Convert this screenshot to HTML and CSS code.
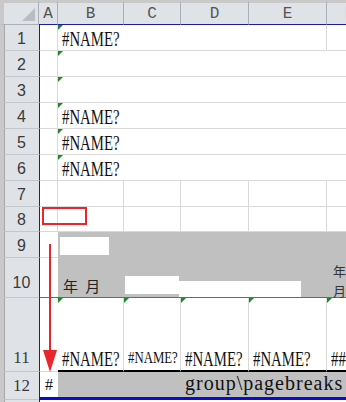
FILE: index.html
```html
<!DOCTYPE html>
<html>
<head>
    <title>Sheet</title>
    <link rel="stylesheet" href="styles.css">
</head>
<body>
<div class="sheet">
    <div class="corner"></div>
    <div class="ch">A</div>
    <div class="ch">B</div>
    <div class="ch">C</div>
    <div class="ch">D</div>
    <div class="ch">E</div>
    <div class="ch">F</div>

    <div class="rh">1</div>
    <div class="c a vr"></div>
    <div class="c span4 vr tri"><span class="err">#NAME?</span></div>
    <div class="c"></div>

    <div class="rh">2</div>
    <div class="c a vr"></div>
    <div class="c span5 tri"></div>

    <div class="rh">3</div>
    <div class="c a vr"></div>
    <div class="c span5 tri"></div>

    <div class="rh">4</div>
    <div class="c a vr"></div>
    <div class="c span5 tri"><span class="err">#NAME?</span></div>

    <div class="rh">5</div>
    <div class="c a vr"></div>
    <div class="c span5 tri"><span class="err">#NAME?</span></div>

    <div class="rh">6</div>
    <div class="c a vr"></div>
    <div class="c span5 tri"><span class="err">#NAME?</span></div>

    <div class="rh">7</div>
    <div class="c a vr"></div>
    <div class="c vr"></div>
    <div class="c vr"></div>
    <div class="c vr"></div>
    <div class="c vr"></div>
    <div class="c vr"></div>

    <div class="rh">8</div>
    <div class="c a vr"></div>
    <div class="c vr"></div>
    <div class="c vr"></div>
    <div class="c vr"></div>
    <div class="c vr"></div>
    <div class="c vr"></div>

    <div class="rh">9</div>
    <div class="c a"></div>
    <div class="band">
        <div class="bcell"><div class="wbox1"></div></div>
        <div class="bcell"></div>
        <div class="bcell"></div>
        <div class="bcell"></div>
        <div class="bcell"></div>
        <div class="bcell ym">年 月</div>
        <div class="bcell boxes">
            <div class="wbox2"></div>
            <div class="wbox3"></div>
        </div>
        <div class="bcell fcol"><span>年</span><span>月</span></div>
    </div>

    <div class="rh rh10">10</div>
    <div class="c a dark"></div>

    <div class="rh serif">11</div>
    <div class="c a"></div>
    <div class="c vr tri blk"><span class="err">#NAME?</span></div>
    <div class="c vr tri blk"><span class="err small">#NAME?</span></div>
    <div class="c vr tri blk"><span class="err">#NAME?</span></div>
    <div class="c vr tri blk"><span class="err">#NAME?</span></div>
    <div class="c vr tri blk"><span class="err">##</span></div>

    <div class="rh serif">12</div>
    <div class="c a blue hash">#</div>
    <div class="c span5 grey blue"><span class="pb">group\pagebreaks</span></div>

    <div class="rh"></div>
    <div class="c a"></div>
    <div class="c span5"></div>

    <div class="sel"></div>
    <svg class="arrow" width="18" height="130" viewBox="0 0 18 130">
        <rect x="7" y="0" width="2" height="110" fill="#e8262b"/>
        <polygon points="1,106 15,106 8,128" fill="#e8262b"/>
    </svg>
</div>
</body>
</html>
```
FILE: styles.css
```css
body {
    margin: 0;
    background-color: #fff;
}

.sheet {
    position: relative;
    width: 346px;
    height: 402px;
    overflow: hidden;
    display: grid;
    grid-template-columns: 39px 19px 66px 57px 68px 78px 46px;
    grid-template-rows: 25px 26px 26px 26px 26px 26px 26px 26px 25px 26px 40px 74px 28px 40px;
    font-family: "Liberation Serif", serif;
    color: #111;
}

.sheet > div {
    box-sizing: border-box;
    min-width: 0;
}

.corner {
    position: relative;
    background-color: #dfe3e8;
    border-top: 3px solid #c9c9c9;
    border-left: 4px solid #c9c9c9;
    border-right: 1px solid #abb0b6;
    border-bottom: 1px solid #abb0b6;
}

.corner::after {
    content: "";
    position: absolute;
    right: 3px;
    bottom: 3px;
    border-bottom: 13px solid #b9bdc2;
    border-left: 13px solid transparent;
}

.ch {
    background-color: #dfe3e8;
    border-top: 3px solid #c9c9c9;
    border-right: 1px solid #abb0b6;
    border-bottom: 1px solid #1c1c9c;
    display: flex;
    align-items: center;
    justify-content: center;
    font-family: "Liberation Mono", monospace;
    font-size: 16px;
    color: #555;
}

.rh {
    background-color: #dfe3e8;
    border-left: 4px solid #c9c9c9;
    border-bottom: 1px solid #c3c8ce;
    box-shadow: inset 1px 0 0 #a8a8a8;
    display: flex;
    align-items: center;
    justify-content: center;
    font-family: "Liberation Sans", sans-serif;
    font-size: 16px;
    color: #3a3a3a;
    padding-top: 2px;
}

.rh10 {
    align-items: flex-end;
    padding-bottom: 5px;
}

.serif {
    font-family: "Liberation Serif", serif;
    font-size: 17px;
    align-items: flex-end;
    padding-bottom: 3px;
}

.c {
    position: relative;
    border-bottom: 1px solid #d9d9d9;
    display: flex;
    align-items: flex-end;
    padding: 0 0 1px 4px;
    white-space: nowrap;
}

.a {
    border-left: 1px solid #1c1c9c;
}

.vr {
    border-right: 1px solid #d9d9d9;
}

.span4 {
    grid-column: span 4;
}

.span5 {
    grid-column: span 5;
}

.tri::before {
    content: "";
    position: absolute;
    left: 0;
    top: 0;
    border-top: 5px solid #1f8a1f;
    border-right: 5px solid transparent;
}

.err {
    display: inline-block;
    font-size: 20px;
    line-height: 20px;
    transform: scaleX(0.74);
    transform-origin: left bottom;
}

.err.small {
    font-size: 16px;
    transform: scaleX(0.8);
    margin-bottom: 1px;
}

.blk {
    border-bottom: 2px solid #000;
}

.dark {
    border-bottom: 1px solid #6a6a6a;
}

.grey {
    background-color: #c0c0c0;
}

.blue {
    border-bottom: 3px solid #0a0ad8;
}

.hash {
    font-size: 16px;
    padding: 0 0 3px 5px;
}

.pb {
    font-size: 20px;
    line-height: 25px;
    letter-spacing: 1px;
    padding-left: 123px;
}

.band {
    grid-column: span 5;
    grid-row: span 2;
    background-color: #c0c0c0;
    border-bottom: 1px solid #6a6a6a;
    display: grid;
    grid-template-columns: 66px 57px 68px 78px 46px;
    grid-template-rows: 26px 39px;
}

.bcell {
    min-width: 0;
    overflow: visible;
}

.wbox1 {
    width: 49px;
    height: 18px;
    margin: 5px 0 0 2px;
    background-color: #fff;
}

.ym {
    display: flex;
    align-items: flex-end;
    padding: 0 0 2px 5px;
    font-family: "Noto Sans CJK JP", sans-serif;
    font-size: 15px;
    line-height: 18px;
    letter-spacing: 2px;
    color: #222;
}

.boxes {
    grid-column: span 3;
    display: flex;
    align-items: flex-end;
}

.wbox2 {
    width: 54px;
    height: 18px;
    margin-left: 1px;
    margin-bottom: 3px;
    background-color: #fff;
}

.wbox3 {
    width: 122px;
    height: 16px;
    background-color: #fff;
}

.fcol {
    display: flex;
    flex-direction: column;
    padding: 3px 0 0 6px;
    font-family: "Noto Sans CJK JP", sans-serif;
    font-size: 13px;
    line-height: 20px;
    color: #333;
}

.sel {
    position: absolute;
    left: 42px;
    top: 207px;
    width: 45px;
    height: 18px;
    border: 2px solid #e8262b;
}

.arrow {
    position: absolute;
    left: 42px;
    top: 244px;
}
```
